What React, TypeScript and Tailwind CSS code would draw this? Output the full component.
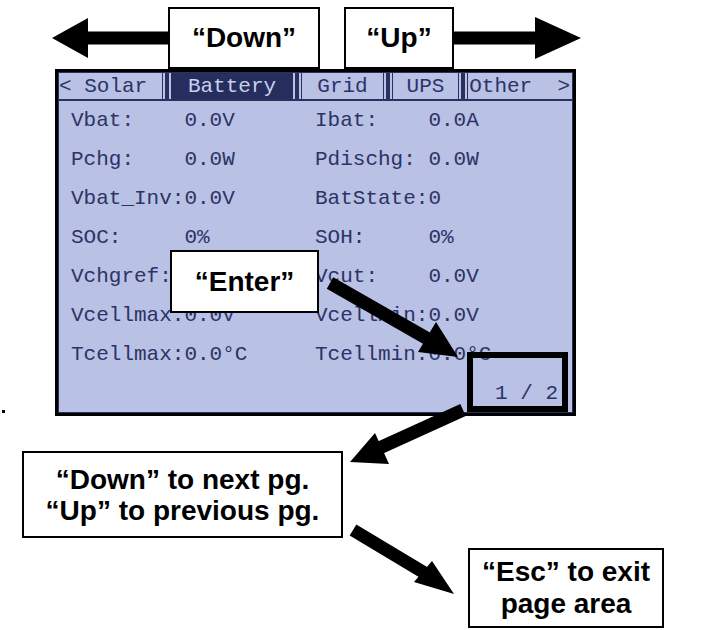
import React from "react";

const rows: [string, string][] = [
  ["Vbat:    0.0V", "Ibat:    0.0A"],
  ["Pchg:    0.0W", "Pdischg: 0.0W"],
  ["Vbat_Inv:0.0V", "BatState:0"],
  ["SOC:     0%", "SOH:     0%"],
  ["Vchgref: 0.0V", "Vcut:    0.0V"],
  ["Vcellmax:0.0V", "Vcellmin:0.0V"],
  ["Tcellmax:0.0°C", "Tcellmin:0.0°C"],
];

function Sep() {
  return <div className="w-[4px] self-stretch bg-[#2a3060] mx-[2px]" />;
}

export default function App() {
  return (
    <div className="relative w-[710px] h-[630px] bg-white overflow-hidden font-['Liberation_Sans',Arial,sans-serif] text-black">
      {/* top row */}
      <div className="flex items-center pl-[52px] pt-[7px] h-[69px]">
        <svg width="116" height="42" viewBox="0 0 116 42" className="block">
          <polygon points="0,21 36,1 36,14.5 116,14.5 116,27.5 36,27.5 36,41" fill="#000" />
        </svg>
        <div className="w-[152px] h-[62px] border-2 border-black flex items-center justify-center text-[28px] font-bold">
          “Down”
        </div>
        <div className="w-[24px]" />
        <div className="w-[110px] h-[62px] border-2 border-black flex items-center justify-center text-[28px] font-bold">
          “Up”
        </div>
        <svg width="127" height="44" viewBox="0 0 127 44" className="block">
          <polygon points="0,15.5 81,15.5 81,1 127,22 81,43 81,28.5 0,28.5" fill="#000" />
        </svg>
      </div>

      {/* LCD screen */}
      <div className="ml-[55px] w-[521px] h-[347px] border-[3px] border-black bg-[#2a3060] p-[1px]">
        <div className="w-full h-full bg-[#b9c1e4] flex flex-col font-['Liberation_Mono',monospace] text-[21px] leading-none text-[#2c3366]">
          {/* tabs */}
          <div className="flex h-[28px] border-b-2 border-[#2a3060]">
            <div className="w-[104px] border-r border-[#2a3060] flex items-center whitespace-pre">{"< Solar"}</div>
            <Sep />
            <div className="w-[122px] bg-[#262e5e] text-[#c9cfec] flex items-center justify-center">Battery</div>
            <Sep />
            <div className="w-[83px] border-x border-[#2a3060] flex items-center justify-center">Grid</div>
            <Sep />
            <div className="w-[67px] border-x border-[#2a3060] flex items-center justify-center">UPS</div>
            <Sep />
            <div className="flex-1 border-l border-[#2a3060] flex items-center justify-end pr-[2px] whitespace-pre">{"Other  >"}</div>
          </div>
          {/* data rows */}
          <div className="flex flex-col pl-[12px]">
            {rows.map(([l, r], i) => (
              <div key={i} className="grid grid-cols-[244px_1fr] h-[39px] items-center whitespace-pre">
                <span>{l}</span>
                <span>{r}</span>
              </div>
            ))}
          </div>
          <div className="flex-1 flex items-center justify-end pr-[14px] whitespace-pre">{"1 / 2"}</div>
        </div>
      </div>

      {/* small dot */}
      <div className="absolute left-[2px] top-[410px] w-[3px] h-[3px] bg-black" />

      {/* 1/2 highlight box */}
      <div className="absolute left-[467px] top-[352px] w-[101px] h-[60px] border-[6px] border-black" />

      {/* Enter box */}
      <div className="absolute left-[170px] top-[250px] w-[149px] h-[63px] border-2 border-black bg-white flex items-center justify-center text-[28px] font-bold">
        “Enter”
      </div>

      {/* arrows */}
      <svg className="absolute left-0 top-0" width="710" height="630" viewBox="0 0 710 630">
        <line x1="330" y1="283" x2="428" y2="339" stroke="#000" strokeWidth="13" />
        <polygon points="458,357 418,352 436,322" fill="#000" />
        <line x1="463" y1="410" x2="375" y2="450" stroke="#000" strokeWidth="13" />
        <polygon points="350,462 375,433 389,464" fill="#000" />
        <line x1="353" y1="530" x2="428" y2="575" stroke="#000" strokeWidth="13" />
        <polygon points="454,594 432,561 414,582" fill="#000" />
      </svg>

      {/* Down/Up page box */}
      <div className="absolute left-[22px] top-[451px] w-[321px] h-[87px] border-2 border-black bg-white flex flex-col items-center justify-center text-[28px] font-bold leading-[31px] whitespace-nowrap">
        <div>“Down” to next pg.</div>
        <div>“Up” to previous pg.</div>
      </div>

      {/* Esc box */}
      <div className="absolute left-[468px] top-[548px] w-[196px] h-[80px] border-2 border-black bg-white flex flex-col items-center justify-center text-[28px] font-bold leading-[32px] whitespace-nowrap">
        <div>“Esc” to exit</div>
        <div>page area</div>
      </div>
    </div>
  );
}
